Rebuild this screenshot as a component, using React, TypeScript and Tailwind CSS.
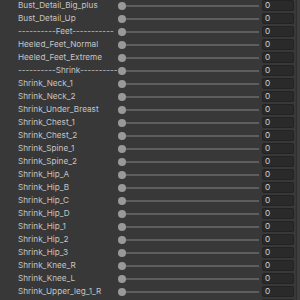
import React from 'react';

const rows: string[] = [
  'Bust_Detail_Big_plus',
  'Bust_Detail_Up',
  '----------Feet-----------',
  'Heeled_Feet_Normal',
  'Heeled_Feet_Extreme',
  '----------Shrink----------',
  'Shrink_Neck_1',
  'Shrink_Neck_2',
  'Shrink_Under_Breast',
  'Shrink_Chest_1',
  'Shrink_Chest_2',
  'Shrink_Spine_1',
  'Shrink_Spine_2',
  'Shrink_Hip_A',
  'Shrink_Hip_B',
  'Shrink_Hip_C',
  'Shrink_Hip_D',
  'Shrink_Hip_1',
  'Shrink_Hip_2',
  'Shrink_Hip_3',
  'Shrink_Knee_R',
  'Shrink_Knee_L',
  'Shrink_Upper_leg_1_R',
];

const BlendRow: React.FC<{ name: string }> = ({ name }) => (
  <div className="flex items-center h-[13px] shrink-0">
    <div className="w-[118px] pl-[18px] shrink-0 text-[8.2px] leading-[13px] text-[#c4c4c4] whitespace-nowrap">
      {name}
    </div>
    {/* slider */}
    <div className="relative w-[141px] h-full flex items-center shrink-0">
      <div className="absolute left-[4px] right-0 h-[2px] bg-[#5e5e5e]"></div>
      <div className="relative w-[8px] h-[8px] rounded-full bg-[#999999]"></div>
    </div>
    <div className="ml-[3px] w-[32px] h-[11px] shrink-0 rounded-[2px] bg-[#2a2a2a] border border-[#232323] flex items-center pl-[2px] text-[8.2px] leading-none text-[#d2d2d2]">
      0
    </div>
  </div>
);

export default function App() {
  return (
    <div
      className="w-[300px] h-[300px] bg-[#383838] overflow-hidden flex"
      style={{ fontFamily: 'Inter, "Liberation Sans", sans-serif' }}
    >
      <div className="flex-1 flex flex-col mt-[-1px]">
        {rows.map((r) => (
          <BlendRow key={r} name={r} />
        ))}
        {/* next field peeking in at the bottom edge */}
        <div className="flex h-[2px] shrink-0 items-end">
          <div className="ml-[262px] w-[32px] h-[1px] bg-[#2a2a2a]"></div>
        </div>
      </div>
      <div className="w-[4px] h-full bg-[#3e3e3e] border-l border-[#2f2f2f]"></div>
    </div>
  );
}
